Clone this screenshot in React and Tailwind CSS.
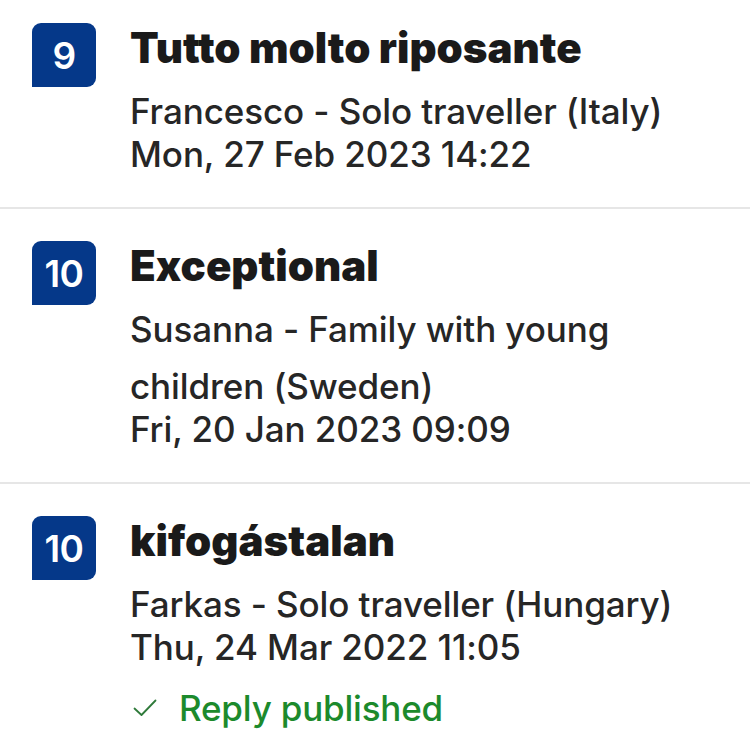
import React from "react";

function Badge({ score }) {
  return (
    <div className="flex h-[64px] w-[64px] shrink-0 items-center justify-center rounded-tl-[9px] rounded-tr-[9px] rounded-br-[9px] rounded-bl-none bg-[#053889] text-[37px] font-semibold leading-none tracking-[-0.5px] text-white">
      {score}
    </div>
  );
}

function Review({ score, title, name, date, first, last, reply }) {
  return (
    <div
      className={
        "flex gap-[34px] pl-[32px] pr-[20px] " +
        (first ? "pt-[23px] " : "pt-[32px] ") +
        (last ? "pb-[30px]" : "pb-[38px] border-b-2 border-[#e6e6e6]")
      }
    >
      <Badge score={score} />
      <div className="flex min-w-0 flex-1 flex-col">
        <div className="text-[42px] font-black leading-[50px] tracking-[0px] text-[#1a1a1a]">
          {title}
        </div>
        <div className="mt-[10px] text-[35px] font-[450] leading-[57px] tracking-[-0.1px] text-[#262626]">
          {name}
        </div>
        <div className="text-[35px] font-[450] leading-[29px] tracking-[-0.1px] text-[#262626]">
          {date}
        </div>
        {reply && (
          <div className="mt-[24px] flex items-center gap-[22px]">
            <svg width="24" height="18" viewBox="0 0 24 18" fill="none" className="ml-[3px]">
              <path d="M1.5 9.5 L8.5 16 L22.5 1.5" stroke="#2f7a3a" strokeWidth="1.8" strokeLinecap="round" strokeLinejoin="round" />
            </svg>
            <span className="text-[35px] font-medium leading-[44px] tracking-[-0.2px] text-[#1c8a2c]">
              Reply published
            </span>
          </div>
        )}
      </div>
    </div>
  );
}

export default function App() {
  return (
    <div
      className="h-[754px] w-[750px] overflow-hidden bg-white"
      style={{ fontFamily: "Inter, 'Noto Sans', sans-serif" }}
    >
      <Review
        first
        score="9"
        title="Tutto molto riposante"
        name="Francesco - Solo traveller (Italy)"
        date="Mon, 27 Feb 2023 14:22"
      />
      <Review
        score="10"
        title="Exceptional"
        name="Susanna - Family with young children (Sweden)"
        date="Fri, 20 Jan 2023 09:09"
      />
      <Review
        last
        reply
        score="10"
        title="kifogástalan"
        name="Farkas - Solo traveller (Hungary)"
        date="Thu, 24 Mar 2022 11:05"
      />
    </div>
  );
}
